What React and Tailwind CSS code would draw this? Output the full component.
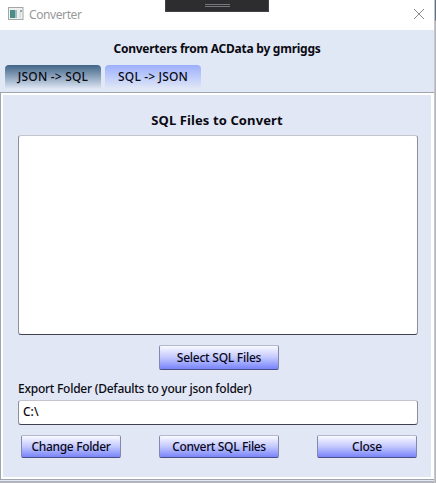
function GlossButton({ children, className }) {
  return (
    <button
      className={`flex shrink-0 items-center justify-center whitespace-nowrap rounded-[2px] border border-t-[#b4b8cc] border-x-[#8488aa] border-b-[#4c4f82] bg-linear-to-b from-[#fafaff] via-[#c3c8fd] via-50% to-[#7a83fa] text-[12px] font-medium leading-none text-[#080818] ${className}`}
    >
      {children}
    </button>
  );
}

function TitleBar() {
  return (
    <header className="flex h-[30px] shrink-0 items-start bg-white">
      <svg className="ml-2 mt-[7px] shrink-0" width="16" height="14" viewBox="0 0 16 14">
        <rect x="0.5" y="0.5" width="14.5" height="12" fill="#eef1f0" stroke="#a1a8a8" />
        <rect x="2" y="3" width="5" height="8" fill="#4b8d88" />
        <rect x="7" y="3" width="2" height="8" fill="#a4bdba" />
        <rect x="12" y="3" width="2" height="2" fill="#9ba3a3" />
        <rect x="11" y="5" width="2" height="6" fill="#dce1e0" />
      </svg>
      <span className="ml-[5px] mt-[7px] w-[60px] text-[12px] leading-4 tracking-[-0.4px] text-[#999]">Converter</span>
      <div className="ml-[76px] flex h-3 w-[104px] shrink-0 flex-col items-center gap-px border-x border-b border-[#454549] bg-[#2d2d30] pt-1">
        <div className="h-px w-[25px] bg-[#77777b]" />
        <div className="h-px w-[25px] bg-[#77777b]" />
      </div>
      <svg className="ml-auto mr-[9px] mt-2" width="12" height="12" viewBox="0 0 12 12">
        <path d="M1 1L11 11M11 1L1 11" stroke="#8b8b8b" strokeWidth="1" fill="none" />
      </svg>
    </header>
  );
}

export default function App() {
  return (
    <div className="flex h-[483px] w-[436px] overflow-hidden bg-[#b5b6bd] font-['Noto_Sans','Open_Sans',sans-serif] text-[12px] text-[#0a0a12]">
      <div className="flex h-[483px] w-[434px] flex-col bg-[#e1e8f5]">
        <TitleBar />
        <h1 className="mt-[10px] h-[18px] shrink-0 text-center text-[12px] font-bold leading-[18px] tracking-[-0.25px]">
          Converters from ACData by gmriggs
        </h1>
        <nav className="mt-[7px] flex h-[27px] shrink-0 gap-1 pl-[5px] font-medium">
          <button className="h-6 w-24 rounded-t-[4px] bg-linear-to-b from-[#416588] to-[#e1e8f5] pb-[2px] leading-[21px] tracking-[0.2px]">
            JSON -&gt; SQL
          </button>
          <button className="h-6 w-24 rounded-t-[4px] bg-linear-to-b from-[#9daffd] to-[#e1e8f5] pb-[2px] leading-[21px] tracking-[0.15px]">
            SQL -&gt; JSON
          </button>
        </nav>
        <main className="flex h-[388px] shrink-0 flex-col border-y border-l border-[#a0a5ae] bg-white pb-[2px] pl-[2px] pr-[3px] pt-[2px]">
          <section className="flex flex-1 flex-col bg-[#e1e7f5] pl-[15px] pr-[13px]">
            <h2 className="mt-4 h-[18px] w-[398px] text-center text-[13px] font-bold leading-[18px] tracking-[0.1px]">
              SQL Files to Convert
            </h2>
            <div className="mt-[6px] h-[200px] w-[400px] rounded-[3px] border border-t-[#c5c6cd] border-x-[#8c8e9a] border-b-[#41414d] bg-white" />
            <GlossButton className="ml-[141px] mt-[10px] h-[25px] w-[120px] tracking-[-0.25px]">
              Select SQL Files
            </GlossButton>
            <label className="mt-[10px] h-[18px] text-[12px] font-medium leading-[18px] tracking-[-0.25px]">
              Export Folder (Defaults to your json folder)
            </label>
            <input
              defaultValue="C:\"
              className="mt-[2px] h-[25px] w-[400px] rounded-[3px] border border-t-[#c5c6cd] border-x-[#8c8e9a] border-b-[#41414d] bg-white pb-[2px] pl-[4px] text-[12px] font-medium outline-none"
            />
            <div className="ml-[3px] mt-[10px] flex h-[23px]">
              <GlossButton className="w-[100px] tracking-[-0.32px]">Change Folder</GlossButton>
              <GlossButton className="ml-[38px] w-[120px] tracking-[-0.35px]">Convert SQL Files</GlossButton>
              <GlossButton className="ml-[38px] w-[100px] tracking-[-0.2px]">Close</GlossButton>
            </div>
          </section>
        </main>
        <div className="mt-px h-[2px] bg-[#b3b4bb]" />
      </div>
      <aside className="w-[2px] border-l border-[#c6c7cb]">
        <div className="h-5 bg-[#5c7084]" />
        <div className="h-px bg-[#8b8f95]" />
      </aside>
    </div>
  );
}
